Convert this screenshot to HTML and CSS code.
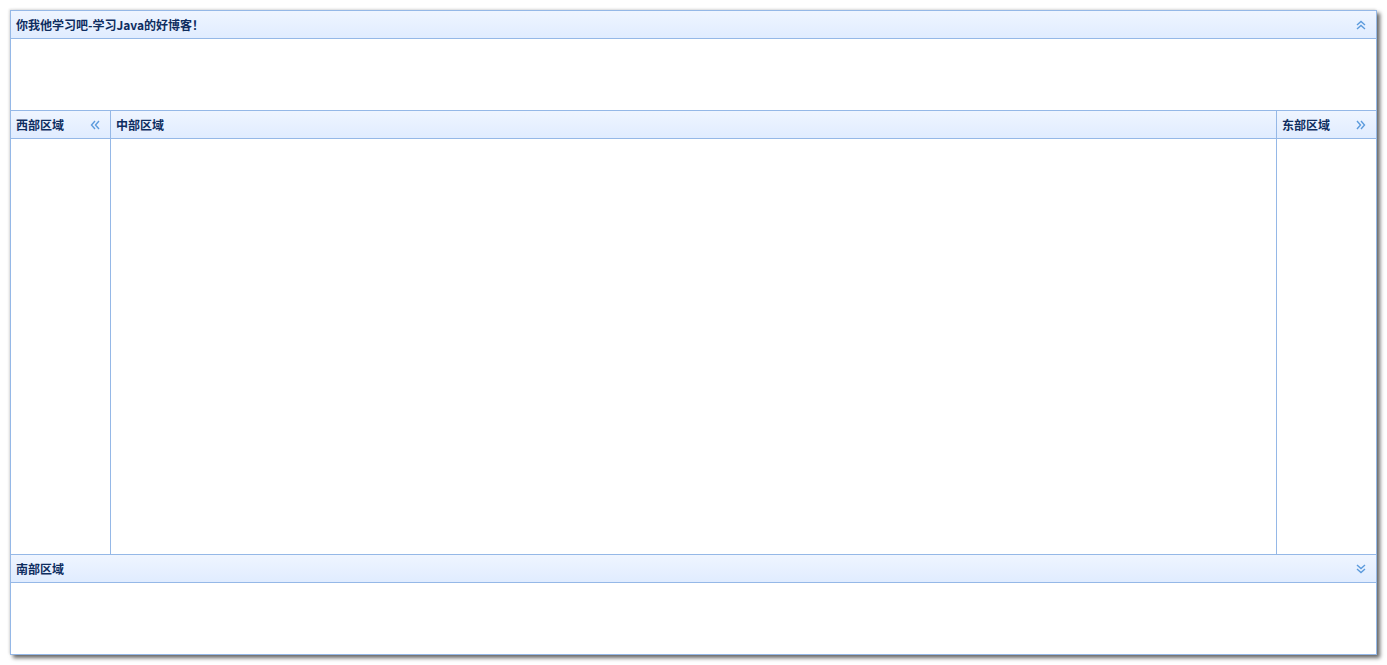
FILE: index.html
```html
<!DOCTYPE html>
<html lang="zh">
<head>
<meta charset="utf-8">
<title>Layout</title>
<link rel="stylesheet" href="styles.css">
</head>
<body>
<div class="layout">
  <section class="region north">
    <div class="header">
      <span class="title">你我他学习吧-学习Java的好博客！</span>
      <svg class="tool" viewBox="0 0 12 12"><polyline points="2,6 6,2.5 10,6"/><polyline points="2,10 6,6.5 10,10"/></svg>
    </div>
    <div class="body"></div>
  </section>
  <div class="middle">
    <section class="region west">
      <div class="header">
        <span class="title">西部区域</span>
        <svg class="tool" viewBox="0 0 12 12"><polyline points="6,2 2.5,6 6,10"/><polyline points="10,2 6.5,6 10,10"/></svg>
      </div>
      <div class="body"></div>
    </section>
    <section class="region center">
      <div class="header">
        <span class="title">中部区域</span>
      </div>
      <div class="body"></div>
    </section>
    <section class="region east">
      <div class="header">
        <span class="title">东部区域</span>
        <svg class="tool" viewBox="0 0 12 12"><polyline points="2,2 5.5,6 2,10"/><polyline points="6,2 9.5,6 6,10"/></svg>
      </div>
      <div class="body"></div>
    </section>
  </div>
  <section class="region south">
    <div class="header">
      <span class="title">南部区域</span>
      <svg class="tool" viewBox="0 0 12 12"><polyline points="2,2 6,5.5 10,2"/><polyline points="2,6 6,9.5 10,6"/></svg>
    </div>
    <div class="body"></div>
  </section>
</div>
</body>
</html>
```
FILE: styles.css
```css
html, body {
  margin: 0;
  padding: 0;
  background: #ffffff;
}
body {
  padding: 10px;
  font-family: "Noto Sans CJK SC", "Liberation Sans", sans-serif;
}
.layout {
  width: 1365px;
  height: 643px;
  border: 1px solid #95B8E7;
  box-shadow: 3px 3px 4px rgba(0, 0, 0, 0.6), -1px -1px 2px rgba(0, 0, 0, 0.12);
  display: flex;
  flex-direction: column;
  background: #fff;
}
.region {
  display: flex;
  flex-direction: column;
}
.header {
  height: 27px;
  border-bottom: 1px solid #95B8E7;
  background: linear-gradient(to bottom, #EFF5FF 0%, #E0ECFF 100%);
  display: flex;
  align-items: center;
  justify-content: space-between;
  padding: 0 9px 0 5px;
  box-sizing: content-box;
}
.title {
  font-size: 12px;
  font-weight: bold;
  color: #0E2D5F;
  line-height: 16px;
  white-space: nowrap;
}
.tool {
  width: 12px;
  height: 12px;
  fill: none;
  stroke: #5C9BDD;
  stroke-width: 1.4;
}
.body {
  flex: 1;
  background: #fff;
}
.north {
  height: 99px;
  border-bottom: 1px solid #95B8E7;
}
.middle {
  height: 443px;
  display: flex;
  border-bottom: 1px solid #95B8E7;
}
.west {
  width: 99px;
  border-right: 1px solid #95B8E7;
}
.center {
  flex: 1;
}
.east {
  width: 99px;
  border-left: 1px solid #95B8E7;
}
.south {
  height: 99px;
}
```
